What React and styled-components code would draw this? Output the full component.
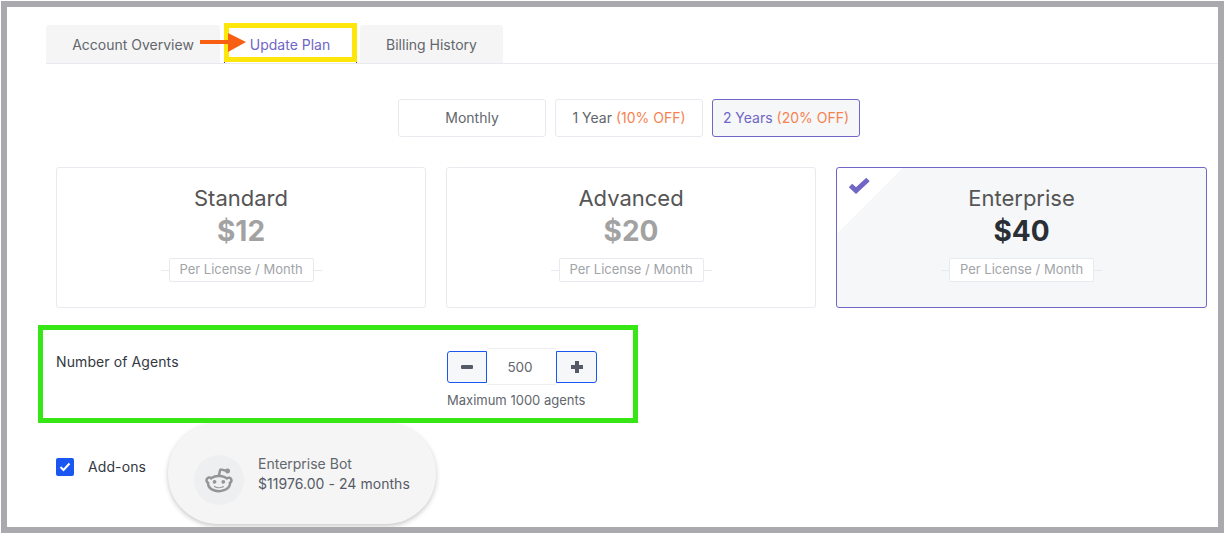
import React from 'react'
import styled, { createGlobalStyle } from 'styled-components'
import { RiRedditLine } from 'react-icons/ri'

const GlobalStyle = createGlobalStyle`
  html, body { margin: 0; padding: 0; background: #fff; }
  body { font-family: Inter, "Noto Sans", sans-serif; color: #555b66; overflow: hidden; }
  * { box-sizing: border-box; }
`

const Frame = styled.div`
  position: relative;
  width: 1223px;
  height: 532px;
  margin: 1px;
  border: 6px solid #a9a9ae;
  overflow: hidden;
`

const TabBar = styled.div`
  display: flex;
  gap: 4px;
  height: 39px;
  margin: 18px 0 0 39px;
  border-bottom: 1px solid #e9eaef;
`

const Tab = styled.div`
  display: flex;
  align-items: center;
  justify-content: center;
  width: ${p => p.$width}px;
  height: 38px;
  background: #f5f5f5;
  color: #62666d;
  border-radius: 3px 3px 0 0;
  font-size: 14px;
`

const ActiveTab = styled(Tab)`
  position: relative;
  height: 39px;
  margin: -2px -1px 0 0;
  padding: 4px 1px 0 0;
  background: #fff;
  color: #6f66c6;
  border: 5px solid #ffe60a;
  border-radius: 0;

  &::before, &::after {
    content: '';
    position: absolute;
    bottom: -6px;
    width: 1px;
    height: 1px;
    background: #45457a;
  }
  &::before { left: -5px; }
  &::after { right: -5px; }
`

const Arrow = styled.svg`
  position: absolute;
  left: 193px;
  top: 26px;
`

const Periods = styled.div`
  display: flex;
  gap: 9px;
  margin: 35px 0 0 391px;
`

const Period = styled.div`
  display: flex;
  align-items: center;
  justify-content: center;
  width: 148px;
  height: 38px;
  padding-bottom: 1px;
  border: 1px solid ${p => (p.$active ? '#6f66c6' : '#e9eaef')};
  border-radius: 3px;
  background: ${p => (p.$active ? '#f6f7f9' : '#fff')};
  color: ${p => (p.$active ? '#6f66c6' : '#62666d')};
  font-size: 14px;
`

const Off = styled.span`
  color: #f58350;
  margin-left: 4px;
`

const Plans = styled.div`
  display: grid;
  grid-template-columns: 370px 370px 371px;
  gap: 20px;
  margin: 30px 0 0 49px;
`

const Plan = styled.div`
  position: relative;
  display: flex;
  flex-direction: column;
  align-items: center;
  height: 141px;
  padding-top: 16px;
  border: 1px solid ${p => (p.$active ? '#6f66c6' : '#e9eaef')};
  border-radius: 3px;
  background: ${p => (p.$active ? 'linear-gradient(135deg, #fff 46px, #f6f7f9 46px)' : '#fff')};
`

const PlanCheck = styled.svg`
  position: absolute;
  left: 11px;
  top: 8px;
`

const PlanName = styled.div`
  font-size: 22px;
  line-height: 28px;
  color: #555;
`

const Price = styled.div`
  font-size: 28px;
  font-weight: 700;
  line-height: 39px;
  color: ${p => (p.$active ? '#2a2e35' : '#a2a2a2')};
`

const Per = styled.div`
  position: relative;
  margin-top: 7px;
  width: 145px;
  height: 24px;
  line-height: 21px;
  text-align: center;
  border: 1px solid #e9eaef;
  border-radius: 2px;
  background: #fff;
  color: #a1a4a9;
  font-size: 13px;

  &::before, &::after {
    content: '';
    position: absolute;
    top: 11px;
    width: 8px;
    height: 1px;
    background: #e9eaef;
  }
  &::before { left: -9px; }
  &::after { right: -9px; }
`

const Agents = styled.section`
  position: relative;
  z-index: 1;
  display: flex;
  width: 600px;
  height: 98px;
  margin: 17px 0 0 31px;
  padding: 18px 0 0 13px;
  border: 5px solid #37e615;
`

const AgentsLabel = styled.div`
  width: 391px;
  font-size: 14px;
  letter-spacing: 0.1px;
  line-height: 28px;
  color: #34383f;
`

const StepperCol = styled.div`
  display: flex;
  flex-direction: column;
`

const Stepper = styled.div`
  display: flex;
  align-items: center;
`

const StepButton = styled.div`
  display: flex;
  align-items: center;
  justify-content: center;
  width: ${p => p.$width}px;
  height: 32px;
  border: 1px solid #1a56f0;
  border-radius: ${p => (p.$side === 'left' ? '3px 0 0 3px' : '0 3px 3px 0')};
  background: #f6f7f9;
  color: #555b66;
`

const StepValue = styled.div`
  width: 69px;
  height: 37px;
  padding-right: 3px;
  line-height: 37px;
  text-align: center;
  border-top: 1px solid #eeeff3;
  border-bottom: 1px solid #eeeff3;
  color: #62666d;
  font-size: 13.5px;
`

const Hint = styled.div`
  margin-top: 6px;
  font-size: 13px;
  line-height: 18px;
  color: #62666d;
`

const AddOns = styled.div`
  display: flex;
  align-items: center;
  height: 101px;
  margin-left: 49px;
`

const CheckBox = styled.span`
  display: flex;
  align-items: center;
  justify-content: center;
  width: 18px;
  height: 18px;
  margin-bottom: 14px;
  border-radius: 2px;
  background: #1a56f0;
`

const AddOnsLabel = styled.span`
  width: 80px;
  margin: 0 0 14px 14px;
  font-size: 14px;
  letter-spacing: 0.1px;
  color: #34383f;
`

const Bot = styled.div`
  display: flex;
  align-items: center;
  gap: 14px;
  width: 268px;
  height: 101px;
  padding-left: 26px;
  border-radius: 50px;
  background: #f5f5f5;
  box-shadow: 0 2px 5px rgba(0, 0, 0, 0.22);
`

const BotAvatar = styled.div`
  display: flex;
  align-items: center;
  justify-content: center;
  width: 50px;
  height: 50px;
  margin-top: 12px;
  border-radius: 50%;
  background: #eeeff1;
  color: #939496;
  font-size: 30px;
`

const BotName = styled.div`
  font-size: 14px;
  line-height: 20px;
  color: #62666d;
`

const BotPrice = styled.div`
  font-size: 14px;
  letter-spacing: 0.05px;
  line-height: 20px;
  color: #555b66;
`

const plans = [
  { name: 'Standard', price: '$12' },
  { name: 'Advanced', price: '$20' },
  { name: 'Enterprise', price: '$40', active: true },
]

const App = () => {
  return (
    <Frame>
      <GlobalStyle />
      <TabBar>
        <Tab $width={174}>Account Overview</Tab>
        <ActiveTab $width={133}>Update Plan</ActiveTab>
        <Tab $width={143}>Billing History</Tab>
      </TabBar>
      <Arrow width="48" height="20" viewBox="0 0 48 20">
        <rect x="0" y="7" width="30" height="4" fill="#f95f12" />
        <path d="M28 0 L46 9 L28 19 Z" fill="#f95f12" />
      </Arrow>

      <Periods>
        <Period>Monthly</Period>
        <Period>1 Year <Off>(10% OFF)</Off></Period>
        <Period $active>2 Years <Off>(20% OFF)</Off></Period>
      </Periods>

      <Plans>
        {plans.map(plan => (
          <Plan key={plan.name} $active={plan.active}>
            {plan.active && (
              <PlanCheck width="22" height="18" viewBox="0 0 22 18">
                <path d="M2.5 9.5 L8 14.5 L20 3.5" fill="none" stroke="#6f66c6" strokeWidth="5" />
              </PlanCheck>
            )}
            <PlanName>{plan.name}</PlanName>
            <Price $active={plan.active}>{plan.price}</Price>
            <Per>Per License / Month</Per>
          </Plan>
        ))}
      </Plans>

      <Agents>
        <AgentsLabel>Number of Agents</AgentsLabel>
        <StepperCol>
          <Stepper>
            <StepButton $width={40} $side="left">
              <svg width="12" height="12" viewBox="0 0 12 12">
                <rect x="0" y="4" width="12" height="4" rx="1" fill="currentColor" />
              </svg>
            </StepButton>
            <StepValue>500</StepValue>
            <StepButton $width={41} $side="right">
              <svg width="12" height="12" viewBox="0 0 12 12">
                <path d="M4 0h4v4h4v4H8v4H4V8H0V4h4z" fill="currentColor" />
              </svg>
            </StepButton>
          </Stepper>
          <Hint>Maximum 1000 agents</Hint>
        </StepperCol>
      </Agents>

      <AddOns>
        <CheckBox>
          <svg width="12" height="10" viewBox="0 0 12 10">
            <path d="M1.5 5 L4.5 8 L10.5 1.5" fill="none" stroke="#fff" strokeWidth="2" />
          </svg>
        </CheckBox>
        <AddOnsLabel>Add-ons</AddOnsLabel>
        <Bot>
          <BotAvatar><RiRedditLine /></BotAvatar>
          <div>
            <BotName>Enterprise Bot</BotName>
            <BotPrice>$11976.00 - 24 months</BotPrice>
          </div>
        </Bot>
      </AddOns>
    </Frame>
  )
}

export default App
